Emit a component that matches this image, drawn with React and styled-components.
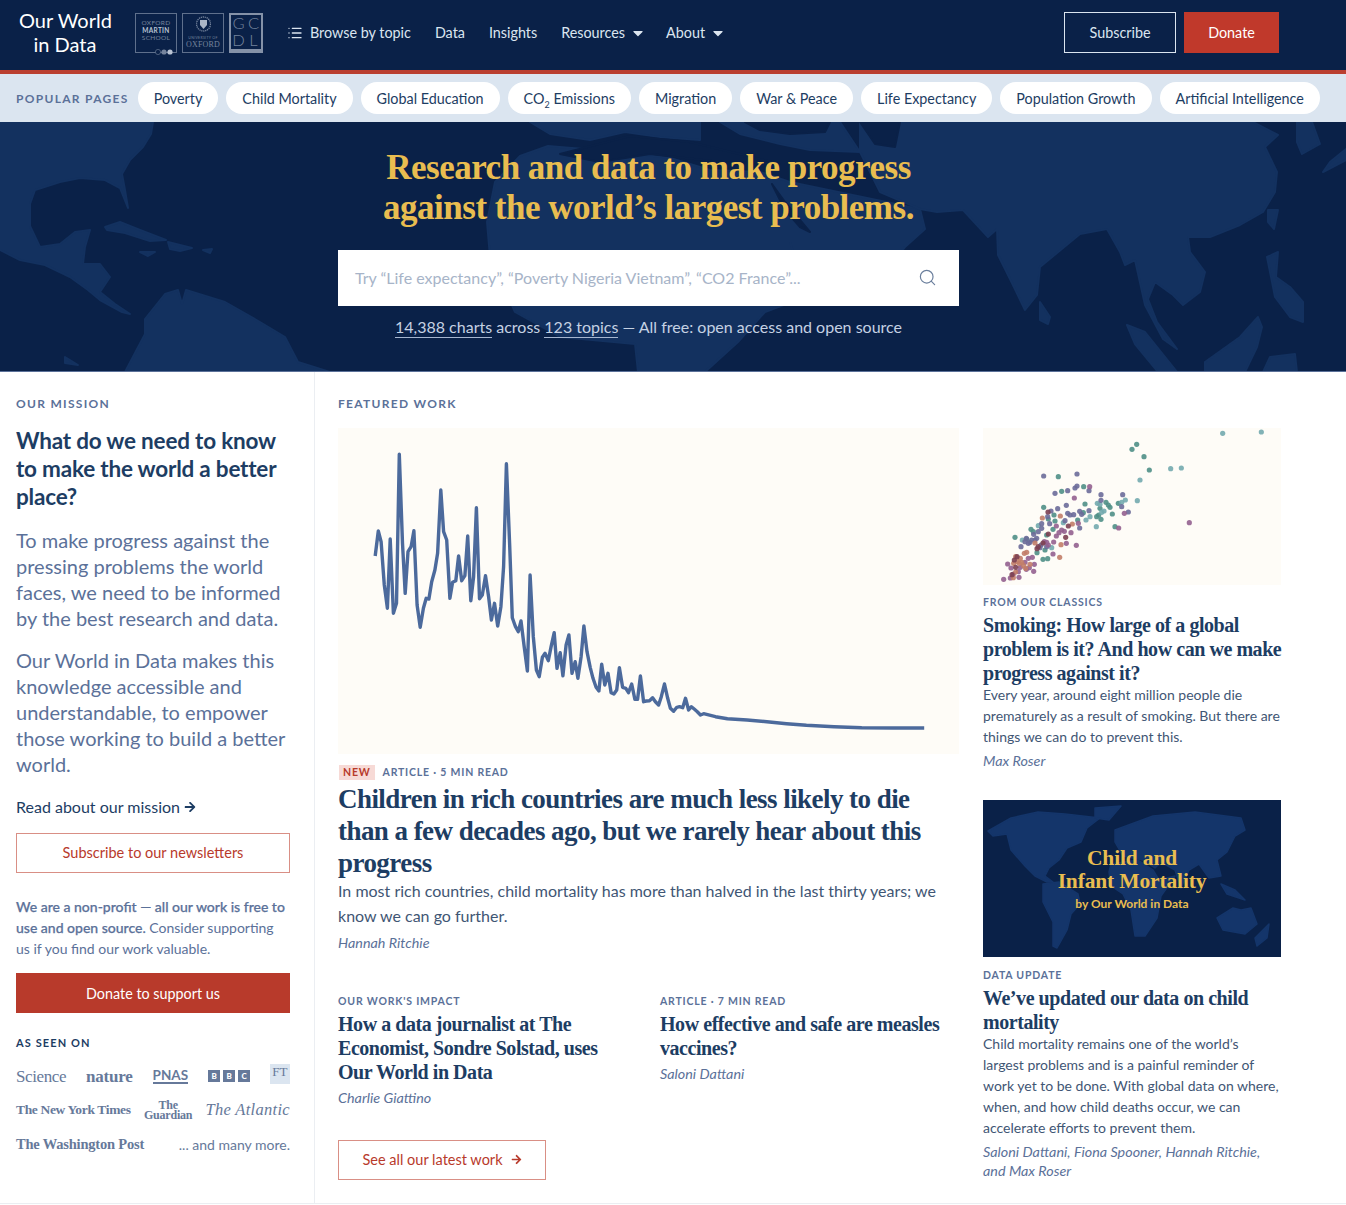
import styled, { createGlobalStyle } from "styled-components";
import { FaCaretDown, FaArrowRight } from "react-icons/fa";
import { List, Search } from "lucide-react";

const NAVY = "#0a2148";
const RED = "#b83a2b";
const SLATE = "#5b7199";
const INK = "#1d3d63";

const POPULAR = [
  "Poverty",
  "Child Mortality",
  "Global Education",
  <>
    CO<sub>2</sub> Emissions
  </>,
  "Migration",
  "War & Peace",
  "Life Expectancy",
  "Population Growth",
  "Artificial Intelligence",
];

// traced from the reference, in zoomed crop coordinates
const CHART = [
  [89, 378], [97, 303], [104, 335], [112, 465], [120, 535], [127, 327], [135, 550], [143, 520], [150, 73], [158, 340],
  [165, 490], [172, 365], [180, 350], [187, 302], [195, 525], [203, 592], [211, 535], [218, 505], [225, 507], [232, 455],
  [240, 420], [247, 370], [255, 180], [262, 305], [270, 330], [278, 505], [285, 457], [293, 452], [300, 378], [308, 452],
  [316, 437], [323, 318], [331, 512], [338, 440], [345, 233], [353, 506], [360, 495], [368, 437], [376, 500], [383, 570],
  [391, 520], [399, 588], [407, 530], [414, 410], [421, 101], [429, 340], [436, 563], [444, 590], [451, 605], [458, 573],
  [466, 650], [474, 723], [481, 435], [489, 620], [497, 720], [504, 740], [512, 682], [519, 670], [527, 692], [534, 650],
  [542, 608], [549, 715], [557, 668], [564, 737], [572, 645], [579, 615], [587, 730], [595, 695], [602, 745], [610, 680],
  [617, 588], [625, 665], [633, 712], [640, 745], [648, 772], [655, 783], [662, 703], [670, 765], [678, 730], [686, 788],
  [693, 792], [700, 780], [707, 713], [715, 772], [723, 775], [730, 788], [738, 762], [746, 808], [753, 808], [760, 738],
  [768, 815], [775, 813], [783, 812], [791, 803], [798, 815], [806, 825], [813, 800], [821, 762], [829, 805], [836, 835],
  [844, 844], [852, 832], [859, 830], [867, 833], [874, 805], [882, 840], [889, 830], [897, 838], [904, 845], [912, 855],
  [920, 851], [950, 860], [980, 866], [1030, 870], [1080, 875], [1130, 881], [1180, 886], [1250, 890], [1320, 893],
  [1400, 894], [1478, 894],
];
const chartPoints = CHART.map(([x, y]) => `${(x / 2.53 + 2).toFixed(1)},${(y / 3 + 2).toFixed(1)}`).join(" ");

const DOTS = {
  "#4f8f86": [[470, 58], [456, 73], [492, 95], [508, 135], [235, 155], [245, 199], [311, 185], [315, 237], [191, 247], [397, 267], [405, 305], [363, 283], [293, 285], [222, 270], [105, 337], [153, 313], [171, 383], [189, 403], [203, 401], [219, 313], [390, 247], [415, 235], [356, 270], [310, 263], [205, 282], [378, 232], [360, 250], [385, 240], [160, 320], [225, 288], [200, 330], [140, 342], [195, 375], [350, 275]],
  "#73aaae": [[728, 25], [844, 21], [572, 131], [604, 129], [480, 165], [472, 227], [436, 225], [349, 305], [352, 235], [127, 345], [175, 302], [318, 285], [372, 258], [425, 232], [215, 368], [360, 238], [365, 262], [330, 275], [250, 293]],
  "#6c6c99": [[191, 153], [291, 147], [225, 205], [263, 197], [285, 189], [291, 183], [327, 197], [363, 209], [428, 209], [259, 241], [233, 251], [213, 258], [263, 265], [281, 269], [327, 257], [299, 259], [445, 261], [425, 245], [209, 296], [185, 296], [175, 320], [161, 328], [299, 309], [139, 340], [145, 355], [165, 345], [123, 365], [255, 287], [203, 275], [150, 352], [183, 360], [363, 226], [305, 268], [270, 270], [185, 310], [170, 340], [155, 345], [200, 365], [180, 368], [135, 350]],
  "#93618f": [[329, 185], [283, 219], [433, 265], [416, 309], [628, 293], [229, 303], [245, 315], [273, 323], [237, 323], [229, 333], [253, 319], [289, 361], [259, 355], [221, 351], [219, 387], [205, 360], [193, 350], [117, 457], [91, 459], [71, 463], [83, 417], [93, 429], [121, 427], [145, 400], [157, 397], [161, 439], [139, 433], [295, 295], [135, 412], [163, 418], [148, 428], [115, 440], [100, 447], [200, 352]],
  "#c27d68": [[187, 279], [241, 273], [277, 297], [243, 359], [239, 397], [133, 385], [107, 395], [121, 400], [101, 415], [131, 422], [150, 418], [107, 441], [137, 430], [165, 354], [112, 410], [125, 412], [140, 382], [118, 415], [100, 458]],
  "#7c4052": [[204, 261], [265, 303], [257, 337], [171, 371], [189, 354], [111, 395], [103, 405], [96, 449], [107, 427], [205, 327], [175, 365]],
};

const GlobalStyle = createGlobalStyle`
  body {
    margin: 0;
    background: #fff;
    font-family: Lato, "Noto Sans", sans-serif;
    color: ${INK};
  }
  * {
    box-sizing: border-box;
  }
  p, h1, h2, h3 {
    margin: 0;
  }
`;

const Page = styled.div`
  width: 1346px;
  height: 1205px;
  overflow: hidden;
`;

const Header = styled.header`
  height: 74px;
  padding: 0 67px 5px 19px;
  display: flex;
  align-items: center;
  background: ${NAVY};
  border-bottom: 4px solid #ba3f30;
`;

const Brand = styled.div`
  width: 92px;
  margin-top: -1px;
  font-size: 20px;
  line-height: 24px;
  text-align: center;
  color: #fff;
  white-space: nowrap;
`;

const Partners = styled.div`
  margin-left: 24px;
  display: flex;
  gap: 5px;
`;

const PartnerBox = styled.div`
  width: ${(p) => p.$w}px;
  height: 40px;
  border: 1px solid #5f708c;
  display: flex;
  flex-direction: column;
  align-items: center;
  justify-content: ${(p) => (p.$end ? "flex-end" : "center")};
  color: #75849d;
  font-size: 6.5px;
  line-height: 7.5px;
  letter-spacing: 0.3px;
  padding-bottom: ${(p) => (p.$end ? "3px" : "4px")};
  position: relative;

  b {
    color: #b9c3d3;
  }
`;

const MartinDots = styled.svg`
  position: absolute;
  right: 2px;
  bottom: -3px;
  width: 19px;
  height: 6px;
`;

const Crest = styled.svg`
  width: 15px;
  height: 18px;
  margin-bottom: 3px;
`;

const TinyCaps = styled.span`
  font-size: 3.5px;
  line-height: 4px;
`;

const OxfordWord = styled.span`
  font-family: "Liberation Serif", serif;
  font-size: 8px;
  line-height: 9px;
  letter-spacing: 0.2px;
`;

const GcdlBox = styled.div`
  width: 34px;
  height: 40px;
  border: 2px solid #8592a8;
  border-bottom-width: 4px;
  display: grid;
  grid-template-columns: 1fr 1fr;
  align-items: center;
  justify-items: center;
  font-size: 16.5px;
  font-weight: 300;
  line-height: 17px;
  color: #74839c;
`;

const Nav = styled.nav`
  margin-left: 24px;
  display: flex;
  align-items: center;
  gap: 24px;
  font-size: 14.35px;
  color: #dbe5f0;
`;

const NavItem = styled.span`
  display: flex;
  align-items: center;
  gap: ${(p) => p.$gap || 7}px;
`;

const Caret = styled(FaCaretDown)`
  margin: 0 -4px;
`;

const HeaderActions = styled.div`
  margin-left: auto;
  display: flex;
  gap: 8px;
`;

const SubscribeBtn = styled.div`
  width: 112px;
  height: 41px;
  border: 1px solid #dbe5f0;
  display: flex;
  align-items: center;
  justify-content: center;
  color: #dbe5f0;
  font-size: 14.35px;
`;

const DonateBtn = styled(SubscribeBtn)`
  width: 95px;
  border: none;
  background: #c0392b;
  color: #fff;
`;

const PopularBar = styled.div`
  height: 48px;
  padding: 0 16px;
  display: flex;
  align-items: center;
  background: #dbe5f0;
`;

const PopularLabel = styled.span`
  margin-right: 9px;
  font-size: 12px;
  font-weight: 700;
  letter-spacing: 1.3px;
  color: ${SLATE};
  white-space: nowrap;
`;

const Pills = styled.div`
  display: flex;
  gap: 8px;
`;

const Pill = styled.span`
  height: 32px;
  padding: 1px 16px 0;
  border-radius: 16px;
  background: #fff;
  font-size: 14.35px;
  line-height: 31px;
  color: ${INK};
  white-space: nowrap;

  sub {
    font-size: 9px;
    line-height: 0;
  }
`;

const Hero = styled.section`
  position: relative;
  height: 250px;
  background: ${NAVY};
  border-bottom: 1px solid #5b7199;
  overflow: hidden;
`;

const HeroMap = styled.svg`
  position: absolute;
  left: 0;
  top: 0;
  width: 1346px;
  height: 250px;
`;

const HeroContent = styled.div`
  position: relative;
  width: 621px;
  margin-left: 338px;
  padding-top: 26px;
  text-align: center;
`;

const HeroTitle = styled.h1`
  font-family: "Liberation Serif", serif;
  font-size: 35px;
  line-height: 40px;
  font-weight: 700;
  color: #e9bd50;
  letter-spacing: -0.5px;
`;

const SearchBox = styled.div`
  height: 56px;
  margin-top: 22px;
  padding: 0 22px 2px 17px;
  display: flex;
  align-items: center;
  justify-content: space-between;
  background: #fff;
  font-size: 16px;
  color: #a7b4c8;
  svg {
    color: #6b7f9d;
  }
`;

const HeroStats = styled.p`
  margin-top: 10px;
  font-size: 16px;
  line-height: 22px;
  color: #c5d1e3;

  u {
    text-decoration: none;
    padding-bottom: 1px;
    border-bottom: 1px solid #a6b6d0;
  }
`;

const Main = styled.main`
  display: flex;
  height: 832px;
  border-bottom: 1px solid #ebeef2;
`;

const Sidebar = styled.aside`
  width: 315px;
  padding: 24px 24px 0 16px;
  border-right: 1px solid #ebeef2;
`;

const SectionLabel = styled.h2`
  font-size: 12px;
  line-height: 16px;
  font-weight: 700;
  letter-spacing: 1.3px;
  color: ${SLATE};
`;

const MissionTitle = styled.h3`
  margin-top: 15px;
  font-size: 22.5px;
  line-height: 28px;
  font-weight: 700;
  letter-spacing: -0.2px;
  color: ${INK};
`;

const MissionText = styled.p`
  margin-top: ${(p) => p.$mt}px;
  font-size: 20px;
  line-height: 26px;
  color: ${SLATE};
`;

const MissionLink = styled.p`
  margin-top: 18px;
  font-size: 16px;
  line-height: 24px;
  display: flex;
  align-items: center;
  gap: 4px;
`;

const GhostButton = styled.div`
  height: 40px;
  margin-top: 14px;
  padding-bottom: 1px;
  display: flex;
  align-items: center;
  justify-content: center;
  gap: 8px;
  border: 1px solid #d98f85;
  font-size: 14.5px;
  color: ${RED};
`;

const Support = styled.p`
  margin-top: 23px;
  font-size: 14px;
  line-height: 21px;
  color: ${SLATE};
`;

const SupportStrong = styled.span`
  font-weight: 500;
  -webkit-text-stroke: 0.25px ${SLATE};
`;

const SupportButton = styled.div`
  height: 40px;
  margin-top: 14px;
  display: flex;
  align-items: center;
  justify-content: center;
  background: ${RED};
  color: #fff;
  font-size: 14.35px;
`;

const SeenLabel = styled.h3`
  margin-top: 22px;
  font-size: 11px;
  line-height: 16px;
  font-weight: 700;
  letter-spacing: 1.1px;
  color: ${INK};
`;

const LogoRow = styled.div`
  display: flex;
  align-items: center;
  justify-content: space-between;
  height: 34px;
  margin-top: ${(p) => p.$mt || 0}px;
  color: #66799a;
  white-space: nowrap;
`;

const SerifLogo = styled.span`
  font-family: "Liberation Serif", serif;
  font-size: ${(p) => p.$size}px;
  font-weight: ${(p) => (p.$bold ? 700 : 400)};
  font-style: ${(p) => (p.$italic ? "italic" : "normal")};
  letter-spacing: ${(p) => p.$ls || 0}px;
  line-height: 1;
`;

const Pnas = styled.span`
  font-size: 13.5px;
  font-weight: 700;
  line-height: 14px;
  border-bottom: 2px solid #66799a;
`;

const Bbc = styled.span`
  display: flex;
  gap: 3px;
`;

const BbcTile = styled.span`
  width: 12px;
  height: 12px;
  display: flex;
  align-items: center;
  justify-content: center;
  background: #66799a;
  color: #fff;
  font-size: 8px;
  font-weight: 900;
`;

const FtTile = styled.span`
  width: 20px;
  height: 20px;
  margin-bottom: 4px;
  display: flex;
  justify-content: center;
  background: #dbe5f0;
  font-family: "Liberation Serif", serif;
  font-size: 13px;
  line-height: 15px;
`;

const Stacked = styled.span`
  font-family: "Liberation Serif", serif;
  font-weight: 700;
  font-size: 12px;
  line-height: 10px;
  text-align: center;
  letter-spacing: -0.2px;
  display: block;
`;

const ManyMore = styled.span`
  font-size: 14px;
`;

const Featured = styled.section`
  flex: 1;
  padding: 24px 0 0 23px;
`;

const FeaturedGrid = styled.div`
  margin-top: 16px;
  display: grid;
  grid-template-columns: 621px 298px;
  gap: 24px;
`;

const Lead = styled.div`
  display: flex;
  flex-direction: column;
`;

const ChartFrame = styled.svg`
  display: block;
  width: 621px;
  height: 326px;
  background: #fefcf7;
`;

const Kicker = styled.div`
  margin-top: ${(p) => p.$mt ?? 10}px;
  display: flex;
  align-items: center;
  gap: 8px;
  height: 16px;
  font-size: 10.5px;
  font-weight: 700;
  letter-spacing: 0.8px;
  color: ${SLATE};
`;

const NewBadge = styled.span`
  margin-left: 1px;
  padding: 0 4px;
  height: 15px;
  line-height: 15px;
  background: #f7dad6;
  color: ${RED};
  font-size: 10.5px;
`;

const LeadTitle = styled.h3`
  margin-top: 3px;
  font-family: "Liberation Serif", serif;
  font-size: 27px;
  line-height: 32px;
  font-weight: 700;
  letter-spacing: -0.55px;
  color: ${INK};
  white-space: nowrap;
`;

const LeadText = styled.p`
  margin-top: -1px;
  font-size: 16px;
  line-height: 25px;
  color: #3f5674;
`;

const Author = styled.p`
  margin-top: ${(p) => p.$mt ?? 4}px;
  font-size: 14.35px;
  line-height: 19px;
  font-style: italic;
  color: ${SLATE};
`;

const SubGrid = styled.div`
  margin-top: 41px;
  display: grid;
  grid-template-columns: 298px 298px;
  gap: 24px;
`;

const CardTitle = styled.h3`
  margin-top: 3px;
  font-family: "Liberation Serif", serif;
  font-size: 20px;
  line-height: 24px;
  font-weight: 700;
  letter-spacing: -0.45px;
  color: ${INK};
  white-space: nowrap;
`;

const CardText = styled.p`
  margin-top: -1px;
  font-size: 14px;
  line-height: 21px;
  color: #3f5674;
`;

const SeeAll = styled(GhostButton)`
  width: 208px;
  margin-top: 33px;
`;

const Side = styled.div`
  display: flex;
  flex-direction: column;
`;

const ScatterFrame = styled.svg`
  display: block;
  width: 298px;
  height: 157px;
  background: #fefcf7;
`;

const Thumb = styled.div`
  position: relative;
  width: 298px;
  height: 157px;
  margin-top: 30px;
  background: ${NAVY};
  overflow: hidden;
`;

const ThumbMap = styled.svg`
  position: absolute;
  left: 0;
  top: 0;
  width: 298px;
  height: 157px;
`;

const ThumbText = styled.div`
  position: relative;
  padding-top: 47px;
  text-align: center;
  color: #e9bd50;
  font-family: "Liberation Serif", serif;
  font-weight: 700;
  font-size: 21.5px;
  letter-spacing: -0.15px;
  line-height: 23px;
`;

const ThumbBy = styled.div`
  margin-top: 2px;
  font-family: Lato, sans-serif;
  font-weight: 700;
  font-size: 12px;
  letter-spacing: 0;
  line-height: 18px;
`;

const HeroLand = () => (
  <HeroMap viewBox="0 0 1346 250" aria-hidden="true">
    <g fill="#13315f" stroke="#13315f" strokeWidth="2" strokeLinejoin="round">
      <path d="M0 0H153L151 12L143 25L130 38L122 52L125 68L128 86L120 66L105 58L80 56L60 60L35 68L30 82L30 104L40 125L60 122L75 110L90 108L85 125L83 142L100 142L110 155L100 170L115 182L130 192L122 190L100 178L88 168L70 155L45 143L20 138L0 128Z" />
      <path d="M105 105L120 100L140 108L166 118L150 119L125 111L107 108Z" />
      <path d="M168 120L192 126L180 129L170 127Z" />
      <path d="M140 130L155 130L148 134Z" />
      <path d="M203 128L212 127L210 131Z" />
      <path d="M145 197L165 172L178 168L182 182L186 168L225 180L260 200L285 215L298 240L330 250H125L145 212Z" />
      <path d="M548 24L520 34L495 60L487 100L490 135L515 190L560 215L635 222L638 250H705L738 220L765 190L797 178L790 140L800 115L840 105L830 95L790 60L760 50L710 48L670 36L620 30Z" />
      <path d="M530 0H700L700 18L660 15L625 10L590 18L550 12Z" />
      <path d="M720 0H840L860 30L810 28L780 22L740 12Z" />
      <path d="M790 60L920 87L925 107L905 125L880 155L850 170L825 175L800 150L790 120Z" />
      <path d="M860 0H1253L1278 13L1265 25L1277 50L1275 70L1263 90L1240 103L1210 115L1188 115L1190 130L1205 150L1200 170L1183 183L1173 173L1155 160L1148 177L1157 200L1177 227L1163 217L1145 183L1135 138L1125 143L1120 130L1107 107L1080 112L1040 145L1037 173L1025 188L1010 157L998 133L997 107L988 115L963 88L937 90L920 87L880 70L860 30Z" />
      <path d="M1297 0L1312 0L1320 22L1302 32L1297 20Z" />
      <path d="M1346 27L1330 40L1323 50L1346 38Z" />
      <path d="M1268 88L1278 88L1274 107L1268 100Z" />
      <path d="M1267 135L1278 130L1276 155L1290 165L1303 180L1303 200L1290 195L1275 175Z" />
      <path d="M1040 180L1050 195L1048 202L1040 198Z" />
      <path d="M1127 203L1145 210L1177 250H1158L1135 222Z" />
      <path d="M1205 240L1240 215L1258 195L1262 205L1257 225L1245 250H1205Z" />
      <path d="M1263 250L1270 235L1295 232L1297 250Z" />
      <path d="M65 235L78 243L65 241Z" />
    </g>
    <g fill={NAVY} stroke={NAVY} strokeWidth="2" strokeLinejoin="round">
      <path d="M560 32L630 14L690 20L780 42L720 40L650 32L600 40Z" />
      <path d="M745 0H830L825 10L790 12L760 8Z" />
      <path d="M860 0H900L895 25L875 22Z" />
      <path d="M772 62L785 80L800 98L810 110L800 105L785 88Z" />
    </g>
  </HeroMap>
);

const ThumbLand = () => (
  <ThumbMap viewBox="0 0 298 157" aria-hidden="true">
    <g fill="#14356a" stroke="#14356a" strokeWidth="1.5" strokeLinejoin="round">
      <path d="M5 31L28 18L55 12L82 14L117 18L104 28L98 42L84 48L76 60L66 68L62 76L70 82L64 82L52 76L42 66L28 50L24 34L10 36Z" />
      <path d="M112 8L138 6L126 20L112 18Z" />
      <path d="M60 84L76 82L95 94L97 104L88 114L84 130L74 148L70 146L70 122L60 102Z" />
      <path d="M132 30L170 16L212 12L258 18L262 30L252 36L244 52L234 60L238 76L226 78L216 64L206 70L198 88L192 70L178 62L172 68L160 60L140 56L132 42Z" />
      <path d="M128 64L155 60L170 70L176 80L192 76L178 96L174 118L162 136L152 136L148 110L140 94L128 86L126 72Z" />
      <path d="M234 118L250 108L258 110L268 108L274 124L262 134L240 130Z" />
      <path d="M238 84L252 90L262 100L244 94Z" />
      <path d="M272 138L286 124L284 138L274 146Z" />
    </g>
  </ThumbMap>
);

const App = () => (
  <Page>
    <GlobalStyle />
    <Header>
      <Brand>
        Our World
        <br />
        in Data
      </Brand>
      <Partners>
        <PartnerBox $w={42}>
          <span>OXFORD</span>
          <b>MARTIN</b>
          <span>SCHOOL</span>
          <MartinDots viewBox="0 0 19 6" aria-hidden="true">
            <circle cx="3" cy="3" r="2.6" fill={NAVY} stroke="#75849d" strokeWidth="0.6" />
            <circle cx="9" cy="3" r="2.6" fill="#75849d" />
            <circle cx="15" cy="3" r="2.6" fill="#b9c3d3" />
          </MartinDots>
        </PartnerBox>
        <PartnerBox $w={42} $end>
          <Crest viewBox="0 0 15 18" aria-hidden="true">
            <circle cx="7.5" cy="9" r="7" fill="none" stroke="#75849d" strokeWidth="1.4" strokeDasharray="1.2 0.8" />
            <path d="M4 5H11V10L7.5 14L4 10Z" fill="#aab5c6" />
          </Crest>
          <TinyCaps>UNIVERSITY OF</TinyCaps>
          <OxfordWord>OXFORD</OxfordWord>
        </PartnerBox>
        <GcdlBox>
          <span>G</span>
          <span>C</span>
          <span>D</span>
          <span>L</span>
        </GcdlBox>
      </Partners>
      <Nav>
        <NavItem>
          <List size={16} strokeWidth={2} />
          Browse by topic
        </NavItem>
        <NavItem>Data</NavItem>
        <NavItem>Insights</NavItem>
        <NavItem $gap={9}>
          Resources
          <Caret size={16} />
        </NavItem>
        <NavItem $gap={9}>
          About
          <Caret size={16} />
        </NavItem>
      </Nav>
      <HeaderActions>
        <SubscribeBtn>Subscribe</SubscribeBtn>
        <DonateBtn>Donate</DonateBtn>
      </HeaderActions>
    </Header>

    <PopularBar>
      <PopularLabel>POPULAR PAGES</PopularLabel>
      <Pills>
        {POPULAR.map((item, i) => (
          <Pill key={i}>{item}</Pill>
        ))}
      </Pills>
    </PopularBar>

    <Hero>
      <HeroLand />
      <HeroContent>
        <HeroTitle>
          Research and data to make progress
          <br />
          against the world’s largest problems.
        </HeroTitle>
        <SearchBox>
          <span>Try “Life expectancy”, “Poverty Nigeria Vietnam”, “CO2 France”...</span>
          <Search size={19} strokeWidth={1.5} />
        </SearchBox>
        <HeroStats>
          <u>14,388 charts</u> across <u>123 topics</u> — All free: open access and open source
        </HeroStats>
      </HeroContent>
    </Hero>

    <Main>
      <Sidebar>
        <SectionLabel>OUR MISSION</SectionLabel>
        <MissionTitle>What do we need to know to make the world a better place?</MissionTitle>
        <MissionText $mt={16}>
          To make progress against the pressing problems the world faces, we need to be informed by the best research
          and data.
        </MissionText>
        <MissionText $mt={16}>
          Our World in Data makes this knowledge accessible and understandable, to empower those working to build a
          better world.
        </MissionText>
        <MissionLink>
          Read about our mission <FaArrowRight size={12} />
        </MissionLink>
        <GhostButton>Subscribe to our newsletters</GhostButton>
        <Support>
          <SupportStrong>We are a non-profit — all our work is free to use and open source.</SupportStrong> Consider
          supporting us if you find our work valuable.
        </Support>
        <SupportButton>Donate to support us</SupportButton>
        <SeenLabel>AS SEEN ON</SeenLabel>
        <LogoRow $mt={8}>
          <SerifLogo $size={17} $ls={-0.4}>Science</SerifLogo>
          <SerifLogo $size={17} $bold $ls={-0.2}>nature</SerifLogo>
          <Pnas>PNAS</Pnas>
          <Bbc>
            <BbcTile>B</BbcTile>
            <BbcTile>B</BbcTile>
            <BbcTile>C</BbcTile>
          </Bbc>
          <FtTile>FT</FtTile>
        </LogoRow>
        <LogoRow>
          <SerifLogo $size={13.5} $bold $ls={-0.35}>The New York Times</SerifLogo>
          <Stacked>
            The
            <br />
            Guardian
          </Stacked>
          <SerifLogo $size={16.5} $italic $ls={0.3}>The Atlantic</SerifLogo>
        </LogoRow>
        <LogoRow>
          <SerifLogo $size={14.5} $bold $ls={-0.2}>The Washington Post</SerifLogo>
          <ManyMore>... and many more.</ManyMore>
        </LogoRow>
      </Sidebar>

      <Featured>
        <SectionLabel>FEATURED WORK</SectionLabel>
        <FeaturedGrid>
          <Lead>
            <ChartFrame viewBox="0 0 621 326" aria-hidden="true">
              <polyline points={chartPoints} fill="none" stroke="#4c6a9c" strokeWidth="3.4" strokeLinejoin="round" />
            </ChartFrame>
            <Kicker>
              <NewBadge>NEW</NewBadge>
              ARTICLE · 5 MIN READ
            </Kicker>
            <LeadTitle>
              Children in rich countries are much less likely to die
              <br />
              than a few decades ago, but we rarely hear about this
              <br />
              progress
            </LeadTitle>
            <LeadText>
              In most rich countries, child mortality has more than halved in the last thirty years; we know we can go
              further.
            </LeadText>
            <Author $mt={5}>Hannah Ritchie</Author>
            <SubGrid>
              <div>
                <Kicker $mt={0}>OUR WORK'S IMPACT</Kicker>
                <CardTitle>
                  How a data journalist at The
                  <br />
                  Economist, Sondre Solstad, uses
                  <br />
                  Our World in Data
                </CardTitle>
                <Author $mt={4}>Charlie Giattino</Author>
              </div>
              <div>
                <Kicker $mt={0}>ARTICLE · 7 MIN READ</Kicker>
                <CardTitle>
                  How effective and safe are measles
                  <br />
                  vaccines?
                </CardTitle>
                <Author $mt={4}>Saloni Dattani</Author>
              </div>
            </SubGrid>
            <SeeAll>
              See all our latest work <FaArrowRight size={11} />
            </SeeAll>
          </Lead>

          <Side>
            <ScatterFrame viewBox="0 0 298 157" aria-hidden="true">
              {Object.entries(DOTS).map(([color, dots]) =>
                dots.map(([x, y]) => (
                  <circle key={`${color}${x}${y}`} cx={x / 3 - 3} cy={y / 3 - 3} r="2.6" fill={color} fillOpacity="0.9" />
                )),
              )}
            </ScatterFrame>
            <Kicker $mt={9}>FROM OUR CLASSICS</Kicker>
            <CardTitle>
              Smoking: How large of a global
              <br />
              problem is it? And how can we make
              <br />
              progress against it?
            </CardTitle>
            <CardText>
              Every year, around eight million people die prematurely as a result of smoking. But there are things we
              can do to prevent this.
            </CardText>
            <Author>Max Roser</Author>
            <Thumb>
              <ThumbLand />
              <ThumbText>
                Child and
                <br />
                Infant Mortality
                <ThumbBy>by Our World in Data</ThumbBy>
              </ThumbText>
            </Thumb>
            <Kicker>DATA UPDATE</Kicker>
            <CardTitle>
              We’ve updated our data on child
              <br />
              mortality
            </CardTitle>
            <CardText>
              Child mortality remains one of the world’s largest problems and is a painful reminder of work yet to be
              done. With global data on where, when, and how child deaths occur, we can accelerate efforts to prevent
              them.
            </CardText>
            <Author>Saloni Dattani, Fiona Spooner, Hannah Ritchie, and Max Roser</Author>
          </Side>
        </FeaturedGrid>
      </Featured>
    </Main>
  </Page>
);

export default App;
